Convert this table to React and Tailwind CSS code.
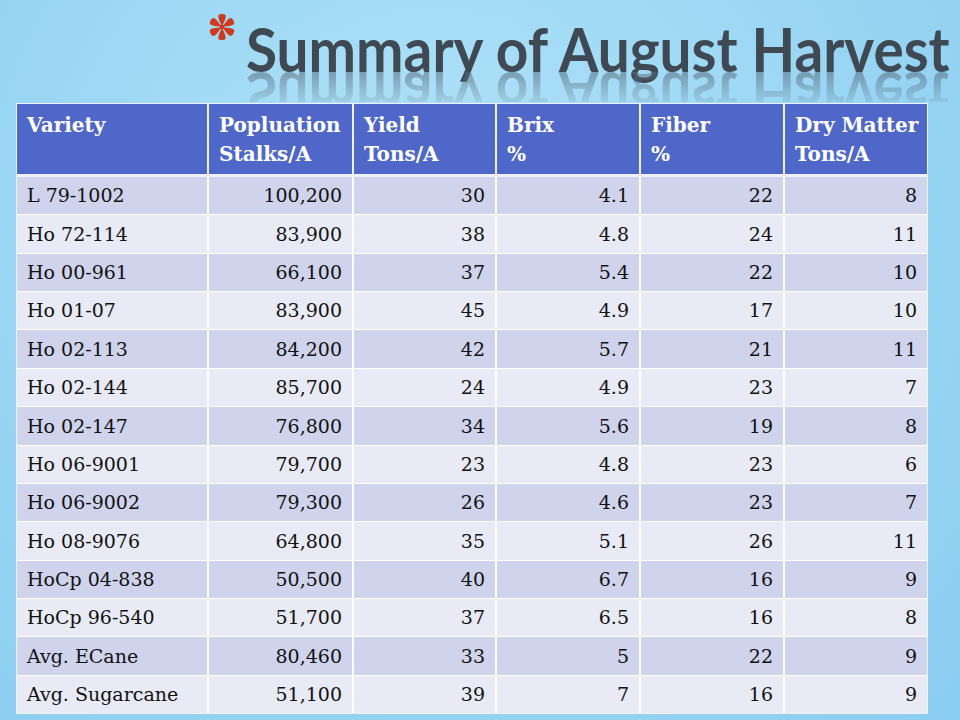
import React from 'react';

const headers = [
    ['Variety'],
    ['Popluation', 'Stalks/A'],
    ['Yield', 'Tons/A'],
    ['Brix', '%'],
    ['Fiber', '%'],
    ['Dry Matter', 'Tons/A'],
];

const rows = [
    ['L 79-1002', '100,200', '30', '4.1', '22', '8'],
    ['Ho 72-114', '83,900', '38', '4.8', '24', '11'],
    ['Ho 00-961', '66,100', '37', '5.4', '22', '10'],
    ['Ho 01-07', '83,900', '45', '4.9', '17', '10'],
    ['Ho 02-113', '84,200', '42', '5.7', '21', '11'],
    ['Ho 02-144', '85,700', '24', '4.9', '23', '7'],
    ['Ho 02-147', '76,800', '34', '5.6', '19', '8'],
    ['Ho 06-9001', '79,700', '23', '4.8', '23', '6'],
    ['Ho 06-9002', '79,300', '26', '4.6', '23', '7'],
    ['Ho 08-9076', '64,800', '35', '5.1', '26', '11'],
    ['HoCp 04-838', '50,500', '40', '6.7', '16', '9'],
    ['HoCp 96-540', '51,700', '37', '6.5', '16', '8'],
    ['Avg. ECane', '80,460', '33', '5', '22', '9'],
    ['Avg. Sugarcane', '51,100', '39', '7', '16', '9'],
];

const cols = 'grid grid-cols-[190px_143px_141px_142px_142px_142px] gap-x-[2px]';

function Asterisk() {
    return (
        <svg width="28" height="28" viewBox="-14 -14 28 28" className="shrink-0">
            {[0, 60, 120, 180, 240, 300].map((a) => (
                <path
                    key={a}
                    transform={`rotate(${a})`}
                    d="M0 -1 C-1.6 -4 -4.2 -9 -3.6 -11.6 C-3 -13.6 3 -13.6 3.6 -11.6 C4.2 -9 1.6 -4 0 -1 Z"
                    fill="#cf3a1e"
                />
            ))}
            <circle r="2.4" fill="#cf3a1e" />
        </svg>
    );
}

export default function App() {
    return (
        <div className="relative w-[960px] h-[720px] overflow-hidden bg-[#96d5f3] bg-[radial-gradient(ellipse_at_45%_30%,#b2e2f8_0%,#a2dbf5_35%,#93d2f2_75%,#8bcdf1_100%)]">
            {/* Titre */}
            <div className="h-[103px] flex items-start pl-[208px] pt-[13px]">
                <Asterisk />
                <div className="relative ml-[10px] mt-[5px] h-[61px] w-[702px]">
                    <h1 className="origin-left scale-x-[0.93] text-[61px] leading-[61px] font-bold text-[#3f4954] font-['Lato',sans-serif] whitespace-nowrap">
                        Summary of August Harvest
                    </h1>
                    {/* reflet */}
                    <div aria-hidden="true" className="absolute left-0 top-[54px] h-[30px] w-[702px] overflow-hidden">
                        <div className="absolute left-0 top-[-7px] origin-left scale-x-[0.93] -scale-y-100 text-[61px] leading-[61px] font-bold text-[#56687a] opacity-60 whitespace-nowrap font-['Lato',sans-serif] [mask-image:linear-gradient(to_bottom,transparent_25%,black_95%)]">
                            Summary of August Harvest
                        </div>
                    </div>
                </div>
            </div>

            {/* Tableau */}
            <div className="relative ml-[16px] w-[912px] bg-[#eef2f8] p-[1px] font-['DejaVu_Serif',serif] text-[#111]">
                <div className={cols}>
                    {headers.map((h, i) => (
                        <div key={i} className="h-[70px] bg-[#4f67c8] text-white font-bold text-[20px] leading-[29px] pt-[7px] pl-[10px] whitespace-nowrap">
                            {h.map((line, j) => (
                                <div key={j}>{line}</div>
                            ))}
                        </div>
                    ))}
                </div>
                <div className={cols + ' mt-[3px] h-[536px] grid-rows-14 gap-y-[1px] bg-white'}>
                    {rows.map((r, i) =>
                        r.map((cell, j) => (
                            <div
                                key={i + '-' + j}
                                className={
                                    'flex items-center text-[19px] whitespace-nowrap ' +
                                    (i % 2 === 0 ? 'bg-[#cfd3ec] ' : 'bg-[#e8eaf5] ') +
                                    (j === 0 ? 'justify-start pl-[10px]' : 'justify-end pr-[10px]')
                                }
                            >
                                {cell}
                            </div>
                        ))
                    )}
                </div>
            </div>
        </div>
    );
}
